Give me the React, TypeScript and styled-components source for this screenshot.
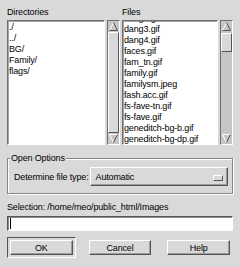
import styled, { createGlobalStyle } from 'styled-components'

const GlobalStyle = createGlobalStyle`
	html, body {
		margin: 0;
		padding: 0;
		background: #d9d9d9;
	}
	body {
		font-family: "Liberation Sans", Arial, sans-serif;
		font-size: 9px;
		letter-spacing: -0.15px;
		color: #000;
	}
`

const directories = ['./', '../', 'BG/', 'Family/', 'flags/']
const files = [
	'dang2.gif',
	'dang3.gif',
	'dang4.gif',
	'faces.gif',
	'fam_tn.gif',
	'family.gif',
	'familysm.jpeg',
	'fash.acc.gif',
	'fs-fave-tn.gif',
	'fs-fave.gif',
	'geneditch-bg-b.gif',
	'geneditch-bg-dp.gif',
	'geneditch-bg.gif'
]

const Dialog = styled.div`
	width: 240px;
	height: 267px;
	box-sizing: border-box;
	padding: 6px 7px 0 7px;
	background: #d9d9d9;
	display: flex;
	flex-direction: column;
`
const Browser = styled.div`
	display: grid;
	grid-template-columns: 113px 1fr;
	column-gap: 2px;
`
const Column = styled.div`
	display: flex;
	flex-direction: column;
	min-width: 0;
`
const Label = styled.div`
	line-height: 12px;
	height: 12px;
	white-space: nowrap;
`
const ListRow = styled.div`
	display: flex;
	column-gap: 2px;
	height: 125px;
	margin-top: 2px;
`
const List = styled.div`
	flex: 1;
	min-width: 0;
	box-sizing: border-box;
	padding: 1px 0 0 1px;
	background: #fff;
	border: 1px solid;
	border-color: #6e6e6e #fff #fff #6e6e6e;
	box-shadow: inset 1px 1px 0 #a6a6a6;
	overflow: hidden;
`
const ListBody = styled.ul<{ $scroll: number }>`
	list-style: none;
	margin: ${(p) => -p.$scroll}px 0 0 0;
	padding: 0;
`
const Item = styled.li`
	line-height: 11px;
	height: 11px;
	white-space: nowrap;
`
const ScrollBar = styled.div`
	width: 13px;
	flex: none;
	box-sizing: border-box;
	border: 1px solid;
	border-color: #6e6e6e #fff #fff #6e6e6e;
	background: #c6c6c6;
	display: flex;
	flex-direction: column;
`
const ArrowBox = styled.div`
	height: 11px;
	flex: none;
	display: flex;
	align-items: center;
	justify-content: center;
`
const Trough = styled.div`
	flex: 1;
	display: flex;
	flex-direction: column;
`
const Thumb = styled.div<{ $start: number; $size: number }>`
	margin-top: ${(p) => p.$start}%;
	height: ${(p) => p.$size}%;
	box-sizing: border-box;
	background: #d9d9d9;
	border: 1px solid;
	border-color: #fff #555 #555 #fff;
`
const Options = styled.fieldset`
	margin: 7px 0 0 0;
	padding: 3px 4px 7px 6px;
	min-width: 0;
	border: 1px solid #878787;
	box-shadow: inset 1px 1px 0 #fff, 1px 1px 0 #fff;
`
const Legend = styled.legend`
	margin-left: -4px;
	padding: 0 1px;
	line-height: 12px;
	background: #d9d9d9;
`
const OptionRow = styled.div`
	display: flex;
	align-items: center;
	height: 19px;
`
const OptionLabel = styled.span`
	flex: none;
	white-space: nowrap;
	padding-right: 1px;
`
const OptionButton = styled.div`
	flex: 1;
	height: 19px;
	box-sizing: border-box;
	display: flex;
	align-items: center;
	justify-content: space-between;
	padding: 0 4px 0 5px;
	border: 1px solid;
	border-color: #fff #555 #555 #fff;
	box-shadow: inset -1px -1px 0 #9c9c9c;
`
const Indicator = styled.span`
	width: 10px;
	height: 6px;
	margin-top: 2px;
	box-sizing: border-box;
	background: #d9d9d9;
	border: 1px solid;
	border-color: #fff #555 #555 #fff;
`
const SelectionLabel = styled.div`
	margin-top: 7px;
	line-height: 12px;
	white-space: nowrap;
`
const TextField = styled.div`
	margin-top: 3px;
	height: 15px;
	box-sizing: border-box;
	background: #fff;
	border: 1px solid;
	border-color: #555 #fff #fff #555;
	box-shadow: inset 1px 1px 0 #8a8a8a;
	display: flex;
	align-items: center;
	padding-left: 2px;
`
const Caret = styled.span`
	width: 1px;
	height: 11px;
	background: #000;
`
const ButtonRow = styled.div`
	display: grid;
	grid-template-columns: 1fr 1fr 1fr;
	column-gap: 10px;
	margin-top: 6px;
	height: 21px;
`
const ButtonCell = styled.div<{ $default?: boolean }>`
	display: flex;
	box-sizing: border-box;
	padding: ${(p) => (p.$default ? '2px' : '3px')};
	border: ${(p) => (p.$default ? '1px solid' : 'none')};
	border-color: #555 #fff #fff #555;
`
const PushButton = styled.button`
	flex: 1;
	margin: 0;
	padding: 0;
	box-sizing: border-box;
	font: inherit;
	letter-spacing: inherit;
	color: #000;
	background: #d9d9d9;
	border: 1px solid;
	border-color: #fff #555 #555 #fff;
	box-shadow: inset -1px -1px 0 #9c9c9c;
	line-height: 12px;
`

const Arrow = ({ down }: { down?: boolean }) => (
	<svg width="9" height="9" viewBox="0 0 9 9">
		{down ? (
			<>
				<polyline points="0.5,0.5 8.5,0.5" stroke="#fff" fill="none" />
				<polyline points="0.5,0.5 4.5,8.5" stroke="#fff" fill="none" />
				<polyline points="8.5,0.5 4.5,8.5" stroke="#555" fill="none" />
			</>
		) : (
			<>
				<polyline points="4.5,0.5 0.5,8.5" stroke="#fff" fill="none" />
				<polyline points="4.5,0.5 8.5,8.5 0.5,8.5" stroke="#555" fill="none" />
			</>
		)}
	</svg>
)

const Scroller = ({ start, size }: { start: number; size: number }) => (
	<ScrollBar>
		<ArrowBox>
			<Arrow />
		</ArrowBox>
		<Trough>
			<Thumb $start={start} $size={size} />
		</Trough>
		<ArrowBox>
			<Arrow down />
		</ArrowBox>
	</ScrollBar>
)

export default function App() {
	return (
		<>
			<GlobalStyle />
			<Dialog>
				<Browser>
					<Column>
						<Label>Directories</Label>
						<ListRow>
							<List>
								<ListBody $scroll={0}>
									{directories.map((d) => (
										<Item key={d}>{d}</Item>
									))}
								</ListBody>
							</List>
							<Scroller start={0} size={100} />
						</ListRow>
					</Column>
					<Column>
						<Label>Files</Label>
						<ListRow>
							<List>
								<ListBody $scroll={9}>
									{files.map((f) => (
										<Item key={f}>{f}</Item>
									))}
								</ListBody>
							</List>
							<Scroller start={6} size={19} />
						</ListRow>
					</Column>
				</Browser>
				<Options>
					<Legend>Open Options</Legend>
					<OptionRow>
						<OptionLabel>Determine file type:</OptionLabel>
						<OptionButton>
							<span>Automatic</span>
							<Indicator />
						</OptionButton>
					</OptionRow>
				</Options>
				<SelectionLabel>Selection: /home/meo/public_html/Images</SelectionLabel>
				<TextField>
					<Caret />
				</TextField>
				<ButtonRow>
					<ButtonCell $default>
						<PushButton>OK</PushButton>
					</ButtonCell>
					<ButtonCell>
						<PushButton>Cancel</PushButton>
					</ButtonCell>
					<ButtonCell>
						<PushButton>Help</PushButton>
					</ButtonCell>
				</ButtonRow>
			</Dialog>
		</>
	)
}
